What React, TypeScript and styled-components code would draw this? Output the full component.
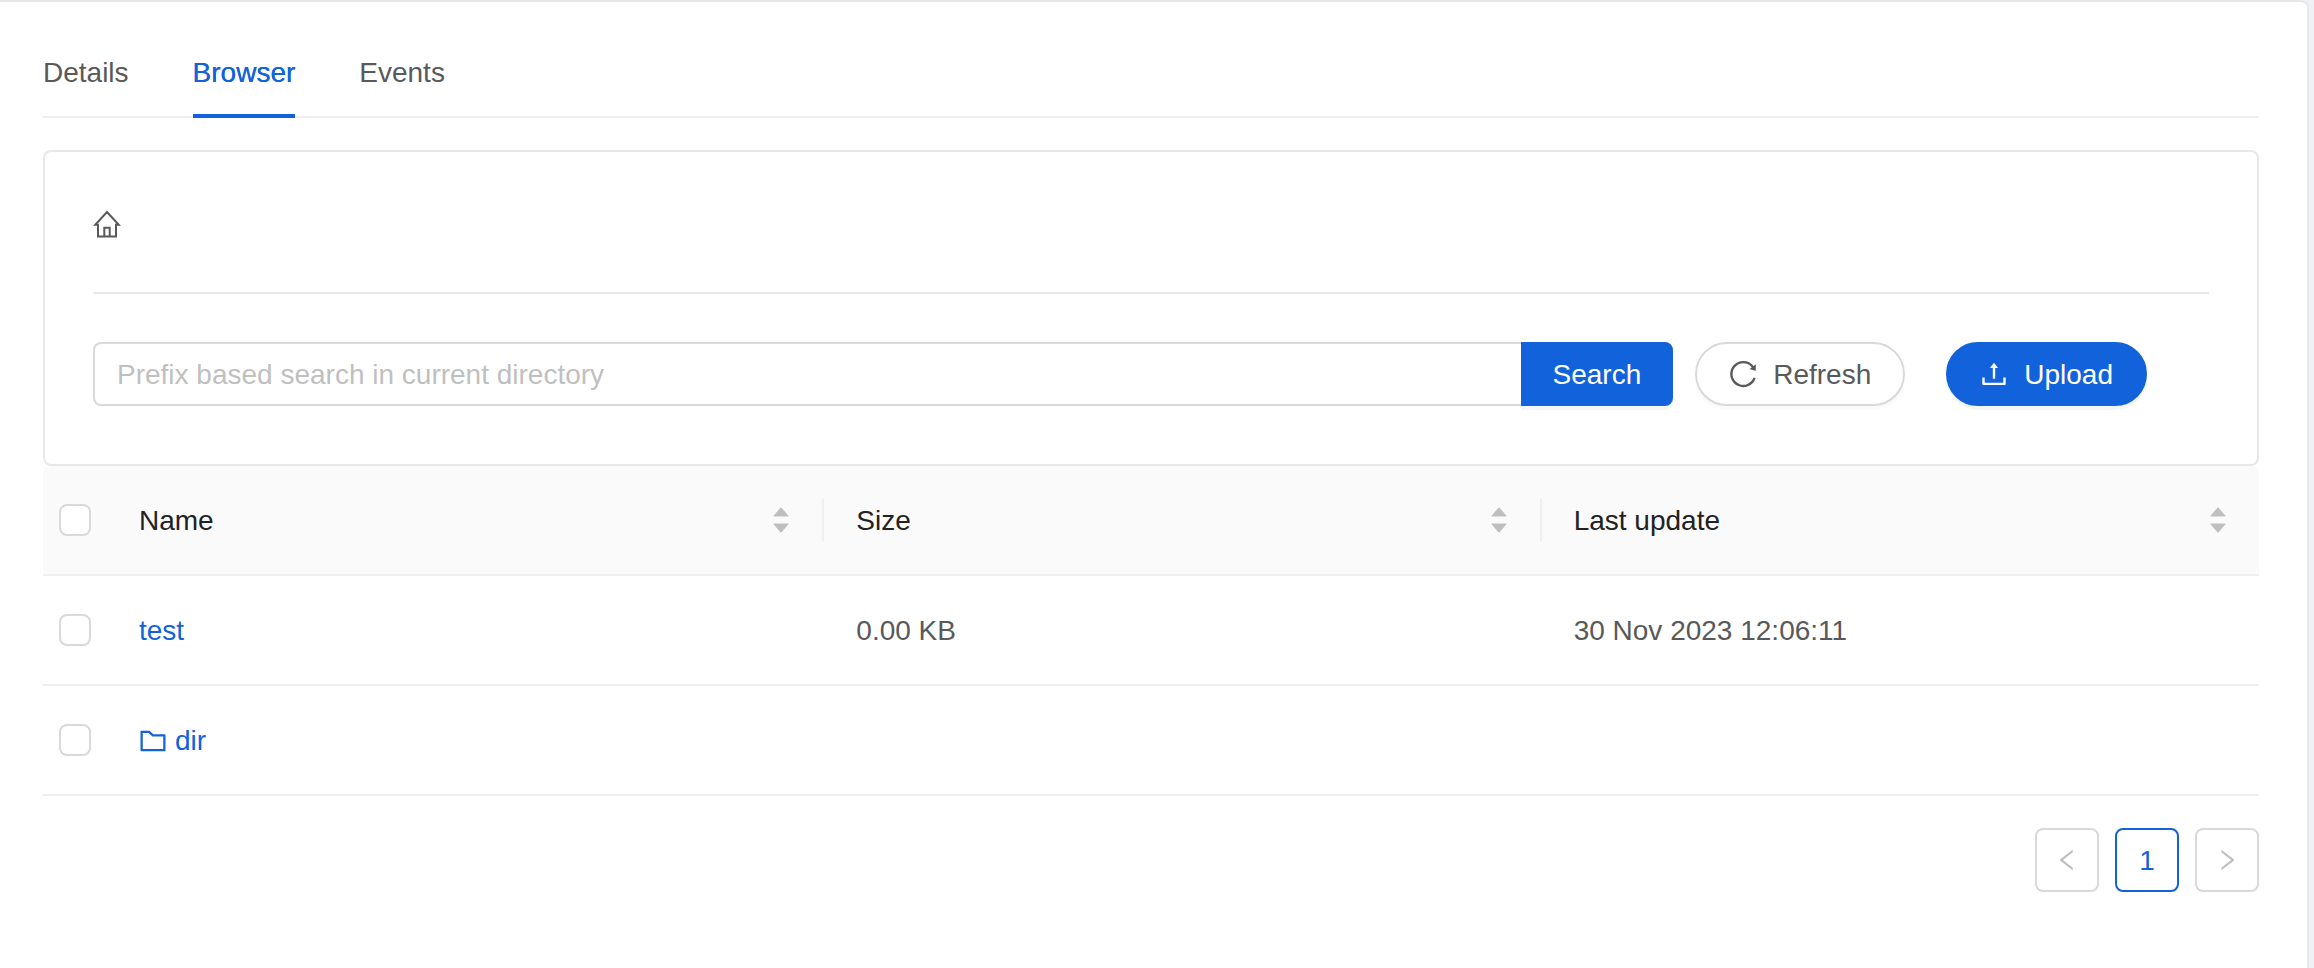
import React, { useState } from "react";
import styled, { createGlobalStyle, css } from "styled-components";
import {
  AiFillCaretDown,
  AiFillCaretUp,
  AiOutlineFolder,
  AiOutlineLeft,
  AiOutlineReload,
  AiOutlineRight,
  AiOutlineUpload,
} from "react-icons/ai";

const color = {
  primary: "#1262db",
  text: "#595959",
  heading: "#222222",
  muted: "#bfbfbf",
  border: "#d9d9d9",
  panel: "#e8e8e8",
  line: "#f0f0f0",
  header: "#fafafa",
  page: "#eff1f6",
};

// The icon glyphs are drawn inside a 64-unit margin; this crops it away.
const glyphBox = "64 64 896 896";

const GlobalStyle = createGlobalStyle`
  *, *::before, *::after { box-sizing: border-box; }
  body {
    margin: 0;
    background: ${color.page};
    color: ${color.text};
    font: 28px/44px "Liberation Sans", Arial, sans-serif;
  }
  button, input { font: inherit; color: inherit; margin: 0; }
  svg { display: block; flex: none; }
`;

const Page = styled.div`
  min-height: 100vh;
  padding-right: 5px;
  display: flex;
`;

const Card = styled.main`
  flex: 1;
  min-width: 0;
  padding: 24px 48px 48px 43px;
  background: #fff;
  border: solid ${color.panel};
  border-width: 2px 2px 0 0;
  border-top-right-radius: 8px;
`;

const TabList = styled.div`
  display: flex;
  gap: 64px;
  margin-bottom: 32px;
  box-shadow: inset 0 -2px ${color.line};
`;

const Tab = styled.button<{ $active: boolean }>`
  padding: 25px 0 19px;
  border: 0;
  border-bottom: 4px solid ${(p) => (p.$active ? color.primary : "transparent")};
  background: none;
  color: ${(p) => (p.$active ? color.primary : color.text)};
  text-shadow: ${(p) => (p.$active ? "0 0 0 currentColor" : "none")};
  cursor: pointer;
`;

const Panel = styled.section`
  padding: 48px 48px 58px;
  border: 2px solid ${color.panel};
  border-radius: 8px;
`;

const Breadcrumb = styled.nav`
  display: flex;
  padding-bottom: 44px;
  border-bottom: 2px solid ${color.panel};
  margin-bottom: 48px;
`;

const HomeLink = styled.a`
  display: flex;
  align-items: center;
  height: 48px;
  color: ${color.text};
`;

const Toolbar = styled.div`
  display: flex;
  align-items: center;
  padding-right: 62px;
`;

const SearchForm = styled.form`
  display: flex;
  flex: 1;
  min-width: 0;
  margin-right: 22px;
`;

const SearchInput = styled.input`
  flex: 1;
  min-width: 0;
  height: 64px;
  padding: 2px 22px 0;
  border: 2px solid ${color.border};
  border-right: 0;
  border-radius: 8px 0 0 8px;
  background: #fff;
  outline: none;
  &::placeholder {
    color: ${color.muted};
    opacity: 1;
  }
`;

const primaryButton = css`
  border-color: ${color.primary};
  background: ${color.primary};
  color: #fff;
  box-shadow: 0 4px 0 rgba(0, 0, 0, 0.04);
`;

const SearchButton = styled.button`
  height: 64px;
  padding: 2px 30px 0;
  border: 2px solid;
  border-radius: 0 8px 8px 0;
  cursor: pointer;
  ${primaryButton}
`;

const PillButton = styled.button<{ $primary?: boolean }>`
  display: flex;
  align-items: center;
  gap: 16px;
  height: 64px;
  padding: 0 32px;
  border: 2px solid ${color.border};
  border-radius: 32px;
  background: #fff;
  box-shadow: 0 4px 0 rgba(0, 0, 0, 0.02);
  cursor: pointer;
  ${(p) => p.$primary && primaryButton}
  & + & {
    margin-left: 41px;
  }
`;

const ButtonLabel = styled.span`
  padding-top: 2px;
`;

const Table = styled.table`
  width: 100%;
  table-layout: fixed;
  border-collapse: separate;
  border-spacing: 0;
`;

const HeadCell = styled.th`
  padding: 32px;
  background: ${color.header};
  border-bottom: 2px solid ${color.line};
  color: ${color.heading};
  font-weight: 400;
  text-align: left;
  &:first-child { border-top-left-radius: 8px; }
  &:last-child { border-top-right-radius: 8px; }
`;

const SortHeadCell = styled(HeadCell)`
  padding-right: 0;
`;

const SortHeader = styled.div<{ $divided: boolean }>`
  display: flex;
  align-items: center;
  justify-content: space-between;
  height: 44px;
  padding-right: 30px;
  border-right: ${(p) => (p.$divided ? `2px solid ${color.line}` : "0")};
`;

const SortButton = styled.button`
  display: flex;
  flex-direction: column;
  padding: 0;
  border: 0;
  background: none;
  color: ${color.muted};
  cursor: pointer;
  svg + svg { margin-top: -6px; }
`;

const Cell = styled.td`
  padding: 33px 32px 31px;
  border-bottom: 2px solid ${color.line};
`;

const SelectHead = styled(HeadCell)`
  width: 64px;
  padding: 32px 16px;
`;

const SelectCell = styled(Cell)`
  padding: 32px 16px;
`;

const Checkbox = styled.input`
  appearance: none;
  display: block;
  width: 32px;
  height: 32px;
  border: 2px solid ${color.border};
  border-radius: 8px;
  background: #fff;
  cursor: pointer;
  &:checked {
    border-color: ${color.primary};
    background: ${color.primary};
  }
`;

const ItemLink = styled.a`
  display: flex;
  align-items: center;
  gap: 8px;
  width: fit-content;
  color: ${color.primary};
  text-decoration: none;
`;

const Pagination = styled.nav`
  display: flex;
  justify-content: flex-end;
  gap: 16px;
  margin-top: 32px;
`;

const PageButton = styled.button<{ $current?: boolean }>`
  display: flex;
  align-items: center;
  justify-content: center;
  width: 64px;
  height: 64px;
  padding: 0;
  border: 2px solid ${(p) => (p.$current ? color.primary : color.border)};
  border-radius: 8px;
  background: #fff;
  color: ${(p) => (p.$current ? color.primary : color.muted)};
`;

const HomeIcon = () => (
  <svg width="28" height="28" viewBox="0 0 28 28" fill="none" stroke="currentColor" strokeWidth="2" aria-hidden="true">
    <path d="M14 2 25.8 14.8H23V26.4H5V14.8H2.2Z" />
    <path d="M11.3 26.4V17.8H16.7V26.4" />
  </svg>
);

const tabs = ["Details", "Browser", "Events"];
const columns = ["Name", "Size", "Last update"];
const items = [
  { name: "test", folder: false, size: "0.00 KB", updated: "30 Nov 2023 12:06:11" },
  { name: "dir", folder: true, size: "", updated: "" },
];

export default function App() {
  const [active, setActive] = useState("Browser");
  const [selected, setSelected] = useState<string[]>([]);

  const toggle = (name: string) =>
    setSelected((s) => (s.includes(name) ? s.filter((n) => n !== name) : [...s, name]));

  return (
    <Page>
      <GlobalStyle />
      <Card>
        <TabList role="tablist">
          {tabs.map((tab) => (
            <Tab
              key={tab}
              type="button"
              role="tab"
              aria-selected={tab === active}
              $active={tab === active}
              onClick={() => setActive(tab)}
            >
              {tab}
            </Tab>
          ))}
        </TabList>

        <Panel>
          <Breadcrumb aria-label="Path">
            <HomeLink href="#root" aria-label="Root directory">
              <HomeIcon />
            </HomeLink>
          </Breadcrumb>
          <Toolbar>
            <SearchForm onSubmit={(e) => e.preventDefault()}>
              <SearchInput
                type="text"
                aria-label="Search in current directory"
                placeholder="Prefix based search in current directory"
              />
              <SearchButton type="submit">Search</SearchButton>
            </SearchForm>
            <PillButton type="button">
              <AiOutlineReload size={28} viewBox={glyphBox} />
              <ButtonLabel>Refresh</ButtonLabel>
            </PillButton>
            <PillButton type="button" $primary>
              <AiOutlineUpload size={28} viewBox={glyphBox} />
              <ButtonLabel>Upload</ButtonLabel>
            </PillButton>
          </Toolbar>
        </Panel>

        <Table>
          <thead>
            <tr>
              <SelectHead>
                <Checkbox
                  type="checkbox"
                  aria-label="Select all"
                  checked={selected.length === items.length}
                  onChange={(e) => setSelected(e.target.checked ? items.map((i) => i.name) : [])}
                />
              </SelectHead>
              {columns.map((column, i) => (
                <SortHeadCell key={column} scope="col">
                  <SortHeader $divided={i < columns.length - 1}>
                    <ButtonLabel>{column}</ButtonLabel>
                    <SortButton type="button" aria-label={`Sort by ${column}`}>
                      <AiFillCaretUp size={22} viewBox="0 0 1024 1024" />
                      <AiFillCaretDown size={22} viewBox="0 0 1024 1024" />
                    </SortButton>
                  </SortHeader>
                </SortHeadCell>
              ))}
            </tr>
          </thead>
          <tbody>
            {items.map((item) => (
              <tr key={item.name}>
                <SelectCell>
                  <Checkbox
                    type="checkbox"
                    aria-label={`Select ${item.name}`}
                    checked={selected.includes(item.name)}
                    onChange={() => toggle(item.name)}
                  />
                </SelectCell>
                <Cell>
                  <ItemLink href={`#${item.name}`}>
                    {item.folder && <AiOutlineFolder size={28} viewBox={glyphBox} />}
                    {item.name}
                  </ItemLink>
                </Cell>
                <Cell>{item.size}</Cell>
                <Cell>{item.updated}</Cell>
              </tr>
            ))}
          </tbody>
        </Table>

        <Pagination aria-label="Pagination">
          <PageButton type="button" disabled aria-label="Previous page">
            <AiOutlineLeft size={24} viewBox={glyphBox} />
          </PageButton>
          <PageButton type="button" $current aria-current="page">
            <ButtonLabel>1</ButtonLabel>
          </PageButton>
          <PageButton type="button" disabled aria-label="Next page">
            <AiOutlineRight size={24} viewBox={glyphBox} />
          </PageButton>
        </Pagination>
      </Card>
    </Page>
  );
}
